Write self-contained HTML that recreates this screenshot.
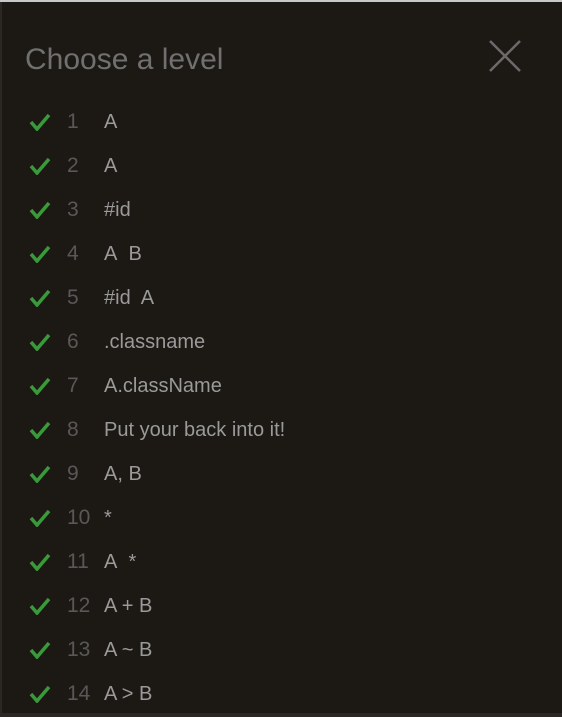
<!DOCTYPE html>
<html><head><style>
html,body{margin:0;padding:0;}
body{width:562px;height:717px;background:#2a2724;position:relative;overflow:hidden;font-family:"Liberation Sans",sans-serif;}
.panel{position:absolute;left:2px;top:2px;right:0;bottom:4px;background:#1c1915;}
.top{position:absolute;left:0;top:0;width:562px;height:2px;background:#c9c9c9;}
h1{position:absolute;left:25px;top:43px;margin:0;font-weight:normal;font-size:30px;color:#707070;}
.x{position:absolute;left:488px;top:39px;}
.row{position:absolute;left:0;height:44px;width:100%;font-size:20px;line-height:44px;}
.row svg{position:absolute;left:29px;top:13px;}
.n{position:absolute;left:67px;color:#585858;font-size:21px;}
.t{position:absolute;left:104px;color:#9a9a9a;}
</style></head><body>
<div class="top"></div>
<div class="panel"></div>
<h1>Choose a level</h1>
<svg class="x" width="34" height="34" viewBox="0 0 34 34"><path d="M2 2L32 32M32 2L2 32" stroke="#6a6a6a" stroke-width="2.5"/></svg>
<div class="row" style="top:100px"><svg width="22" height="18"><path d="M2 9l6 7L20 2" stroke="#3a9a3a" stroke-width="3.5" fill="none"/></svg><span class="n">1</span><span class="t">A</span></div>
<div class="row" style="top:144px"><svg width="22" height="18"><path d="M2 9l6 7L20 2" stroke="#3a9a3a" stroke-width="3.5" fill="none"/></svg><span class="n">2</span><span class="t">A</span></div>
<div class="row" style="top:188px"><svg width="22" height="18"><path d="M2 9l6 7L20 2" stroke="#3a9a3a" stroke-width="3.5" fill="none"/></svg><span class="n">3</span><span class="t">#id</span></div>
<div class="row" style="top:232px"><svg width="22" height="18"><path d="M2 9l6 7L20 2" stroke="#3a9a3a" stroke-width="3.5" fill="none"/></svg><span class="n">4</span><span class="t">A&nbsp; B</span></div>
<div class="row" style="top:276px"><svg width="22" height="18"><path d="M2 9l6 7L20 2" stroke="#3a9a3a" stroke-width="3.5" fill="none"/></svg><span class="n">5</span><span class="t">#id&nbsp; A</span></div>
<div class="row" style="top:320px"><svg width="22" height="18"><path d="M2 9l6 7L20 2" stroke="#3a9a3a" stroke-width="3.5" fill="none"/></svg><span class="n">6</span><span class="t">.classname</span></div>
<div class="row" style="top:364px"><svg width="22" height="18"><path d="M2 9l6 7L20 2" stroke="#3a9a3a" stroke-width="3.5" fill="none"/></svg><span class="n">7</span><span class="t">A.className</span></div>
<div class="row" style="top:408px"><svg width="22" height="18"><path d="M2 9l6 7L20 2" stroke="#3a9a3a" stroke-width="3.5" fill="none"/></svg><span class="n">8</span><span class="t">Put your back into it!</span></div>
<div class="row" style="top:452px"><svg width="22" height="18"><path d="M2 9l6 7L20 2" stroke="#3a9a3a" stroke-width="3.5" fill="none"/></svg><span class="n">9</span><span class="t">A, B</span></div>
<div class="row" style="top:496px"><svg width="22" height="18"><path d="M2 9l6 7L20 2" stroke="#3a9a3a" stroke-width="3.5" fill="none"/></svg><span class="n">10</span><span class="t">*</span></div>
<div class="row" style="top:540px"><svg width="22" height="18"><path d="M2 9l6 7L20 2" stroke="#3a9a3a" stroke-width="3.5" fill="none"/></svg><span class="n">11</span><span class="t">A&nbsp; *</span></div>
<div class="row" style="top:584px"><svg width="22" height="18"><path d="M2 9l6 7L20 2" stroke="#3a9a3a" stroke-width="3.5" fill="none"/></svg><span class="n">12</span><span class="t">A + B</span></div>
<div class="row" style="top:628px"><svg width="22" height="18"><path d="M2 9l6 7L20 2" stroke="#3a9a3a" stroke-width="3.5" fill="none"/></svg><span class="n">13</span><span class="t">A ~ B</span></div>
<div class="row" style="top:672px"><svg width="22" height="18"><path d="M2 9l6 7L20 2" stroke="#3a9a3a" stroke-width="3.5" fill="none"/></svg><span class="n">14</span><span class="t">A &gt; B</span></div>
</body></html>
